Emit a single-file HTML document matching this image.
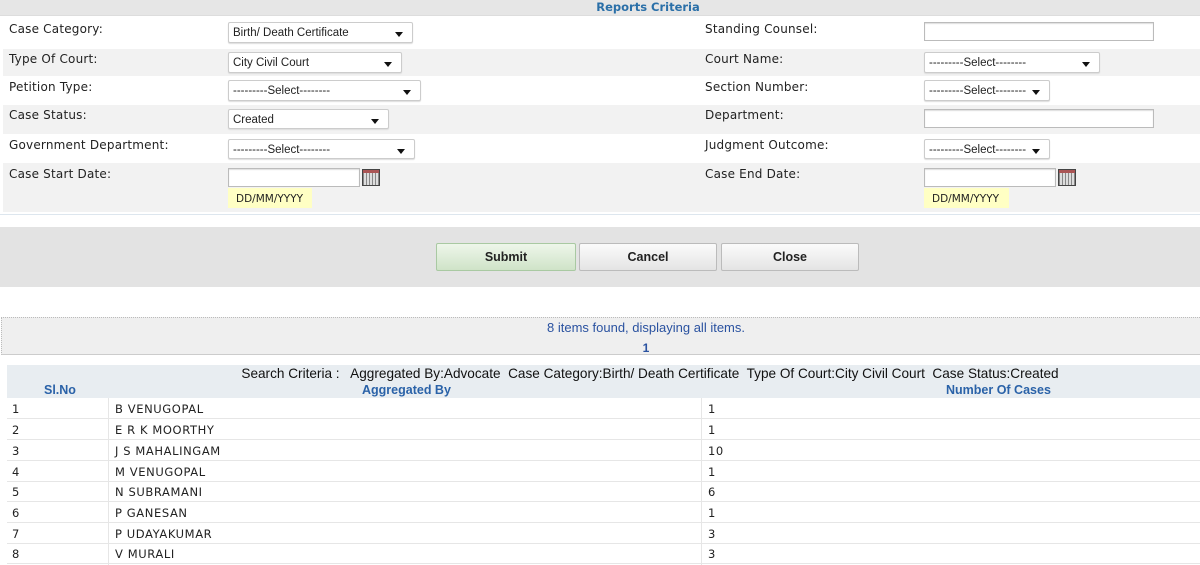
<!DOCTYPE html>
<html><head><meta charset="utf-8"><style>
*{margin:0;padding:0;box-sizing:border-box}
body{width:1200px;height:565px;background:#fff;position:relative;overflow:hidden;font-family:"DejaVu Sans",Verdana,sans-serif;font-size:11.5px;color:#222}
.a{position:absolute}
.lbl{position:absolute;font-size:12px;color:#222;letter-spacing:0.2px}
.sel{position:absolute;background:#fff;border:1px solid #ccc;border-radius:2px;font-family:"Liberation Sans",Arial,sans-serif;font-size:11.5px;color:#222;padding:4px 0 0 4px;box-shadow:0 1px 1px #ddd}
.sel:after{content:"";position:absolute;right:9px;top:9px;border-left:4px solid transparent;border-right:4px solid transparent;border-top:5px solid #111}
.inp{position:absolute;background:#fff;border:1px solid #bbb;box-shadow:inset 0 1px 1px #ddd}
.cal{position:absolute;width:18px;height:17px;border:1px solid #444;background:repeating-linear-gradient(90deg,#888 0 1px,#ddd 1px 3px);}
.cal:before{content:"";position:absolute;left:0;right:0;top:0;height:3px;background:#a55}
.dd{position:absolute;background:#ffffc4;font-size:10.5px;padding:5px 0 0 8px;height:20px}
.btn{position:absolute;height:28px;border:1px solid #bbb;border-radius:2px;background:linear-gradient(#fbfbfb,#e4e4e4);font-family:"Liberation Sans",Arial,sans-serif;font-weight:bold;font-size:12.5px;text-align:center;line-height:27px;color:#222}
.row{position:absolute;left:7px;width:1193px;height:21px;border-bottom:1px solid #e6e6e6;font-size:11.5px;letter-spacing:0.6px}
.row span{position:absolute;top:4px}
.th{position:absolute;font-family:"Liberation Sans",Arial,sans-serif;font-weight:bold;font-size:12.5px;color:#2a62a8}
</style></head><body>
<div class="a" style="left:0;top:0;width:1200px;height:16px;background:#e6e6e6;border-bottom:1px solid #ddd"></div>
<div class="a" style="left:0;width:1296px;top:0;text-align:center;font-weight:bold;font-size:11.5px;color:#2a6fa8">Reports Criteria</div>
<div class="a" style="left:3px;top:49px;width:1197px;height:27px;background:#f2f2f2"></div>
<div class="a" style="left:3px;top:105px;width:1197px;height:29px;background:#f2f2f2"></div>
<div class="a" style="left:3px;top:163px;width:1197px;height:49px;background:#f2f2f2"></div>
<div class="a" style="left:0;top:214px;width:1200px;height:2px;border-top:1px solid #dde6ee"></div>

<div class="lbl" style="left:9px;top:22px">Case Category:</div>
<div class="lbl" style="left:9px;top:52px">Type Of Court:</div>
<div class="lbl" style="left:9px;top:80px">Petition Type:</div>
<div class="lbl" style="left:9px;top:108px">Case Status:</div>
<div class="lbl" style="left:9px;top:138px">Government Department:</div>
<div class="lbl" style="left:9px;top:167px">Case Start Date:</div>
<div class="lbl" style="left:705px;top:22px">Standing Counsel:</div>
<div class="lbl" style="left:705px;top:52px">Court Name:</div>
<div class="lbl" style="left:705px;top:80px">Section Number:</div>
<div class="lbl" style="left:705px;top:108px">Department:</div>
<div class="lbl" style="left:705px;top:138px">Judgment Outcome:</div>
<div class="lbl" style="left:705px;top:167px">Case End Date:</div>

<div class="sel" style="left:228px;top:22px;width:185px;height:21px">Birth/ Death Certificate</div>
<div class="sel" style="left:228px;top:52px;width:174px;height:21px">City Civil Court</div>
<div class="sel" style="left:228px;top:80px;width:193px;height:21px">---------Select--------</div>
<div class="sel" style="left:228px;top:109px;width:161px;height:20px">Created</div>
<div class="sel" style="left:228px;top:139px;width:187px;height:20px">---------Select--------</div>
<div class="inp" style="left:228px;top:168px;width:132px;height:19px"></div>
<div class="cal" style="left:362px;top:169px"></div>
<div class="dd" style="left:228px;top:188px;width:84px">DD/MM/YYYY</div>

<div class="inp" style="left:924px;top:22px;width:230px;height:19px"></div>
<div class="sel" style="left:924px;top:52px;width:176px;height:21px">---------Select--------</div>
<div class="sel" style="left:924px;top:80px;width:126px;height:21px">---------Select--------</div>
<div class="inp" style="left:924px;top:109px;width:230px;height:19px"></div>
<div class="sel" style="left:924px;top:139px;width:126px;height:20px">---------Select--------</div>
<div class="inp" style="left:924px;top:168px;width:132px;height:19px"></div>
<div class="cal" style="left:1058px;top:169px"></div>
<div class="dd" style="left:924px;top:188px;width:85px">DD/MM/YYYY</div>

<div class="a" style="left:0;top:227px;width:1200px;height:60px;background:#e3e3e3"></div>
<div class="btn" style="left:436px;top:243px;width:140px;background:linear-gradient(#eef6ea,#cfe3c8);border-color:#a9c9a2">Submit</div>
<div class="btn" style="left:579px;top:243px;width:138px">Cancel</div>
<div class="btn" style="left:721px;top:243px;width:138px">Close</div>

<div class="a" style="left:1px;top:317px;width:1199px;height:38px;background:#efefef;border-top:1px dotted #bbb;border-left:1px dotted #bbb;border-bottom:1px solid #ccc"></div>
<div class="a" style="left:0;width:1292px;top:320px;text-align:center;font-family:'Liberation Sans',Arial,sans-serif;font-size:13px;color:#2a52a0">8 items found, displaying all items.</div>
<div class="a" style="left:0;width:1292px;top:341px;text-align:center;font-family:'Liberation Sans',Arial,sans-serif;font-size:12px;font-weight:bold;color:#2a52a0">1</div>

<div class="a" style="left:7px;top:365px;width:1193px;height:33px;background:#e8edf1"></div>
<div class="a" style="left:0;width:1300px;top:366px;text-align:center;font-family:'Liberation Sans',Arial,sans-serif;font-size:13.6px;color:#111;white-space:pre">Search Criteria :   Aggregated By:Advocate  Case Category:Birth/ Death Certificate  Type Of Court:City Civil Court  Case Status:Created</div>
<div class="th" style="left:44px;top:383px">Sl.No</div>
<div class="th" style="left:362px;top:383px">Aggregated By</div>
<div class="th" style="left:946px;top:383px">Number Of Cases</div>

<div class="a" style="left:108px;top:398px;width:1px;height:167px;background:#e6e6e6"></div>
<div class="a" style="left:701px;top:398px;width:1px;height:167px;background:#e6e6e6"></div>

<div class="row" style="top:398px"><span style="left:5px">1</span><span style="left:108px">B VENUGOPAL</span><span style="left:701px">1</span></div>
<div class="row" style="top:419px"><span style="left:5px">2</span><span style="left:108px">E R K MOORTHY</span><span style="left:701px">1</span></div>
<div class="row" style="top:440px"><span style="left:5px">3</span><span style="left:108px">J S MAHALINGAM</span><span style="left:701px">10</span></div>
<div class="row" style="top:461px"><span style="left:5px">4</span><span style="left:108px">M VENUGOPAL</span><span style="left:701px">1</span></div>
<div class="row" style="top:481px"><span style="left:5px">5</span><span style="left:108px">N SUBRAMANI</span><span style="left:701px">6</span></div>
<div class="row" style="top:502px"><span style="left:5px">6</span><span style="left:108px">P GANESAN</span><span style="left:701px">1</span></div>
<div class="row" style="top:523px"><span style="left:5px">7</span><span style="left:108px">P UDAYAKUMAR</span><span style="left:701px">3</span></div>
<div class="row" style="top:543px"><span style="left:5px">8</span><span style="left:108px">V MURALI</span><span style="left:701px">3</span></div>
</body></html>
